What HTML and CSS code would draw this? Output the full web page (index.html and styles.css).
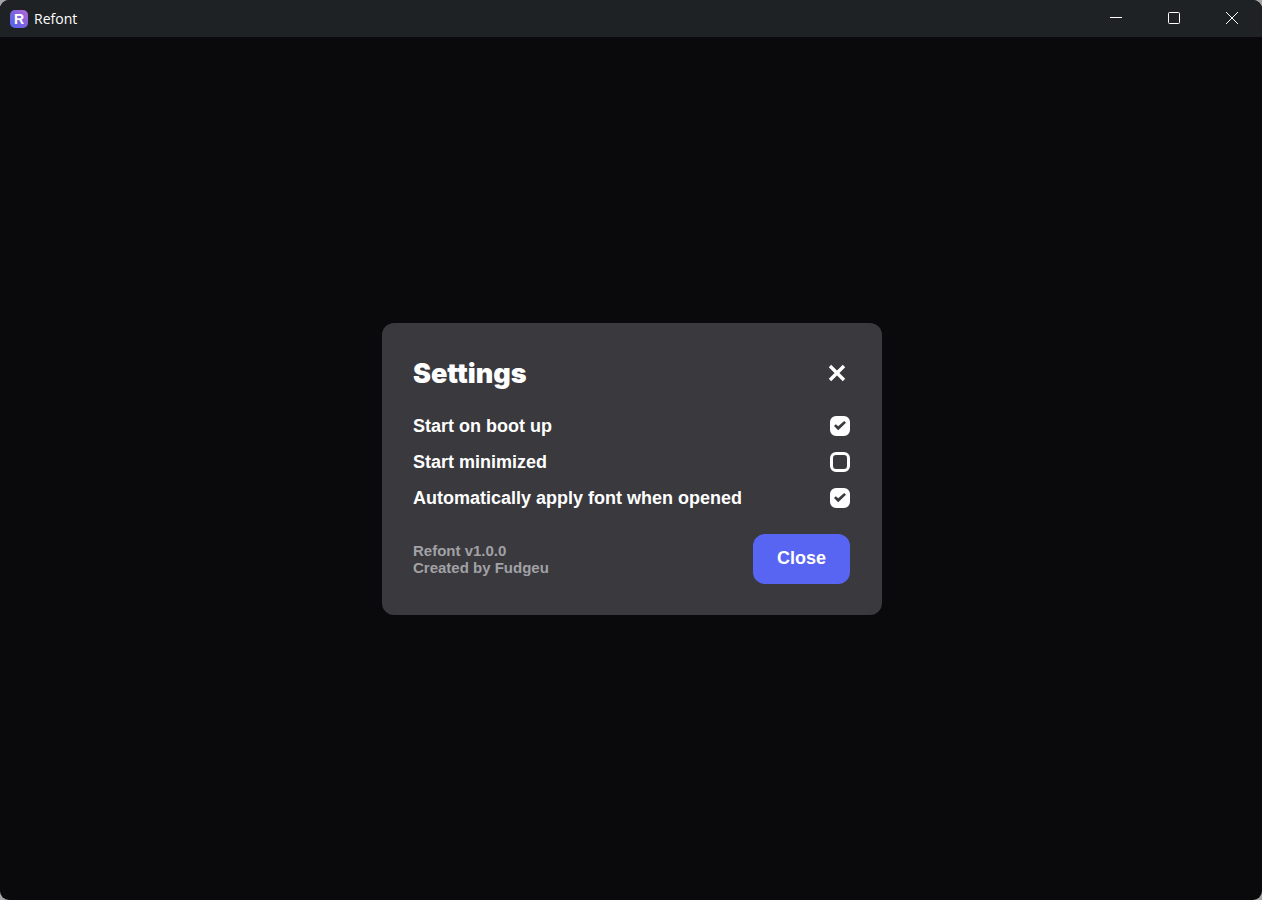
FILE: index.html
```html
<!DOCTYPE html>
<html lang="en">
<head>
<meta charset="utf-8">
<title>Refont</title>
<link rel="stylesheet" href="styles.css">
</head>
<body>
<div class="window">
  <header class="titlebar">
    <svg class="app-icon" viewBox="0 0 18 18" aria-hidden="true">
      <defs>
        <linearGradient id="logo" x1="0" y1="1" x2="1" y2="0">
          <stop offset="0" stop-color="#4f63ee"/>
          <stop offset=".5" stop-color="#7c62e0"/>
          <stop offset="1" stop-color="#b667d8"/>
        </linearGradient>
      </defs>
      <rect width="18" height="18" rx="5" fill="url(#logo)"/>
      <text class="app-letter" x="9" y="14" text-anchor="middle">R</text>
    </svg>
    <span class="app-name">Refont</span>
    <div class="window-controls">
      <button class="window-button" aria-label="Minimize"><svg viewBox="0 0 14 14"><path d="M1 6.5h12"/></svg></button>
      <button class="window-button" aria-label="Maximize"><svg viewBox="0 0 14 14"><rect x="1.5" y="1.5" width="11" height="11" rx="1"/></svg></button>
      <button class="window-button" aria-label="Close window"><svg viewBox="0 0 14 14"><path d="M1 1l12 12M13 1L1 13"/></svg></button>
    </div>
  </header>
  <main class="stage">
    <section class="dialog" role="dialog" aria-labelledby="dialog-title">
      <div class="dialog-head">
        <h1 class="dialog-title" id="dialog-title">Settings</h1>
        <button class="dismiss" aria-label="Dismiss"><svg viewBox="0 0 18 18"><path d="M2 2l14 14M16 2L2 16"/></svg></button>
      </div>
      <div class="options">
        <label class="option"><span class="option-text">Start on boot up</span><input class="check" type="checkbox" checked></label>
        <label class="option"><span class="option-text">Start minimized</span><input class="check" type="checkbox"></label>
        <label class="option"><span class="option-text">Automatically apply font when opened</span><input class="check" type="checkbox" checked></label>
      </div>
      <div class="dialog-foot">
        <p class="about">Refont v1.0.0<br>Created by Fudgeu</p>
        <button class="close">Close</button>
      </div>
    </section>
  </main>
</div>
</body>
</html>
```
FILE: styles.css
```css
* {
  box-sizing: border-box;
}

body {
  margin: 0;
  background: #a5a5a5;
  color: #fff;
  font-family: "Liberation Sans", Arial, sans-serif;
}

button {
  border: 0;
  padding: 0;
  background: none;
  color: inherit;
  font: inherit;
}

.window {
  display: flex;
  flex-direction: column;
  min-height: 100vh;
  border-radius: 9px;
  overflow: hidden;
  background: #0a0a0c;
}

.titlebar {
  display: flex;
  align-items: center;
  height: 37px;
  padding-left: 10px;
  background: #1e2224;
}

.app-icon {
  width: 18px;
  height: 18px;
}

.app-letter {
  fill: #fff;
  font: bold 14px "Liberation Sans", Arial, sans-serif;
}

.app-name {
  margin-left: 6px;
  font: 14px "Open Sans", "Noto Sans", sans-serif;
}

.window-controls {
  display: flex;
  height: 36px;
  margin: 0 1px auto auto;
}

.window-button {
  display: grid;
  place-items: center;
  width: 58px;
}

.window-button svg {
  width: 14px;
  height: 14px;
  fill: none;
  stroke: #fff;
  stroke-width: 1;
}

.stage {
  flex: 1;
  display: grid;
  place-items: center;
  padding-left: 2px;
}

.dialog {
  width: 500px;
  max-width: 100%;
  padding: 31px 32px 31px 31px;
  border-radius: 12px;
  background: #39393e;
}

.dialog-head,
.option,
.dialog-foot {
  display: flex;
  align-items: center;
  justify-content: space-between;
}

.dialog-head {
  height: 40px;
}

.dialog-title {
  margin: 0;
  font: 900 27px/40px Inter, "Arial Black", sans-serif;
}

.dismiss {
  display: grid;
  width: 18px;
  margin: 0 4px 2px 0;
}

.dismiss svg {
  width: 18px;
  height: 18px;
  fill: none;
  stroke: #fff;
  stroke-width: 3.4;
}

.options {
  display: grid;
  gap: 12px;
  margin-top: 20px;
}

.option {
  height: 24px;
  font-size: 18px;
  font-weight: bold;
}

.option-text {
  padding-top: 2px;
}

.check {
  appearance: none;
  display: grid;
  width: 20px;
  height: 20px;
  margin: 0;
  border: 3px solid #fff;
  border-radius: 6px;
}

.check:checked {
  background: #fff;
}

.check:checked::after {
  content: "";
  place-self: center;
  width: 12px;
  height: 10px;
  background: #39393e;
  clip-path: polygon(0 55%, 15% 38%, 35% 58%, 85% 5%, 100% 22%, 35% 98%);
}

.dialog-foot {
  margin-top: 24px;
}

.about {
  margin: 0;
  color: #a1a1a6;
  font-size: 15px;
  line-height: 17px;
  font-weight: bold;
}

.close {
  height: 50px;
  padding: 0 24px;
  border-radius: 12px;
  background: #5865f2;
  font-size: 18px;
  font-weight: bold;
}
```
